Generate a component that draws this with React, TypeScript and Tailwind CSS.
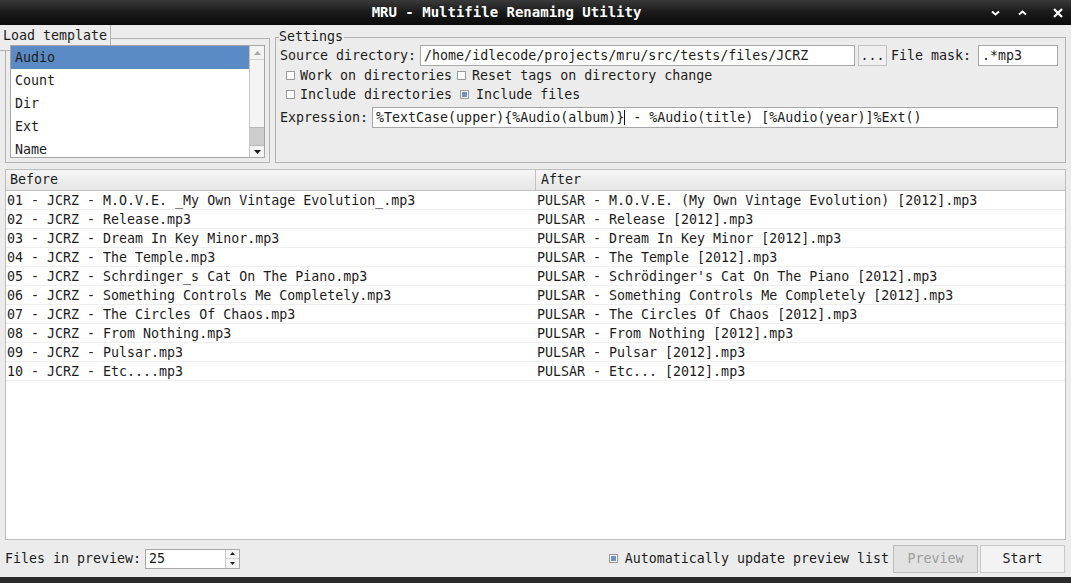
import React from 'react';

const BEFORE = [
    '01 - JCRZ - M.O.V.E. _My Own Vintage Evolution_.mp3',
    '02 - JCRZ - Release.mp3',
    '03 - JCRZ - Dream In Key Minor.mp3',
    '04 - JCRZ - The Temple.mp3',
    '05 - JCRZ - Schrdinger_s Cat On The Piano.mp3',
    '06 - JCRZ - Something Controls Me Completely.mp3',
    '07 - JCRZ - The Circles Of Chaos.mp3',
    '08 - JCRZ - From Nothing.mp3',
    '09 - JCRZ - Pulsar.mp3',
    '10 - JCRZ - Etc....mp3',
];

const AFTER = [
    'PULSAR - M.O.V.E. (My Own Vintage Evolution) [2012].mp3',
    'PULSAR - Release [2012].mp3',
    'PULSAR - Dream In Key Minor [2012].mp3',
    'PULSAR - The Temple [2012].mp3',
    "PULSAR - Schrödinger's Cat On The Piano [2012].mp3",
    'PULSAR - Something Controls Me Completely [2012].mp3',
    'PULSAR - The Circles Of Chaos [2012].mp3',
    'PULSAR - From Nothing [2012].mp3',
    'PULSAR - Pulsar [2012].mp3',
    'PULSAR - Etc... [2012].mp3',
];

const TEMPLATES = ['Audio', 'Count', 'Dir', 'Ext', 'Name'];

function Checkbox({ checked }: { checked?: boolean }) {
    return (
        <span className="w-[9px] h-[9px] border border-[#9a9a9a] bg-white flex items-center justify-center shrink-0">
            {checked && <span className="w-[5px] h-[5px] bg-[#6b93c6]" />}
        </span>
    );
}

function TitleBar() {
    return (
        <div className="h-[25px] shrink-0 flex items-center bg-gradient-to-b from-[#3a3a3a] via-[#1a1a1a] to-[#0b0b0b] text-white relative">
            <div className="flex-1 flex justify-center pr-[58px] font-bold text-[14px]">
                MRU - Multifile Renaming Utility
            </div>
            <div className="absolute right-0 top-0 h-[25px] flex items-center">
                <svg width="9" height="6" viewBox="0 0 9 6" className="mr-[18px]">
                    <path d="M1 1.5 L4.5 4.5 L8 1.5" stroke="white" strokeWidth="2" fill="none" />
                </svg>
                <svg width="9" height="6" viewBox="0 0 9 6" className="mr-[26px]">
                    <path d="M1 4.5 L4.5 1.5 L8 4.5" stroke="white" strokeWidth="2" fill="none" />
                </svg>
                <svg width="10" height="10" viewBox="0 0 10 10" className="mr-[8px]">
                    <path d="M1 1 L9 9 M9 1 L1 9" stroke="white" strokeWidth="2.2" fill="none" />
                </svg>
            </div>
        </div>
    );
}

function LoadTemplate() {
    return (
        <div className="relative w-[265px] h-[125px] mt-[1px] border border-[#b2b2b2] pl-[4px] pr-[4px] pt-[6px]">
            {/* Title tab */}
            <div className="absolute left-[-6px] top-[-14px] w-[111px] h-[26px] bg-[#ececec] border-r border-b border-[#b2b2b2] pl-[3px] leading-[22px]">
                Load template
            </div>
            <div className="relative z-10 h-[113px] border border-[#a6a6a6] bg-white flex">
                <div className="flex-1 overflow-hidden">
                    {TEMPLATES.map((t, i) => (
                        <div
                            key={t}
                            className={`h-[23px] px-[4px] flex items-center ${i === 0 ? 'bg-[#5b8bc4]' : ''}`}
                        >
                            {t}
                        </div>
                    ))}
                </div>
                {/* Scrollbar */}
                <div className="w-[15px] border-l border-[#c4c4c4] bg-[#f4f4f4] flex flex-col">
                    <div className="h-[14px] border-b border-[#cfcfcf] flex items-center justify-center">
                        <svg width="7" height="4" viewBox="0 0 7 4">
                            <path d="M0 4 L3.5 0 L7 4 Z" fill="#a8a8a8" />
                        </svg>
                    </div>
                    <div className="flex-1 flex flex-col justify-end">
                        <div className="h-[19px] bg-[#cdcdcd] border-t border-b border-[#b8b8b8]" />
                    </div>
                    <div className="h-[11px] flex items-center justify-center">
                        <svg width="7" height="4" viewBox="0 0 7 4">
                            <path d="M0 0 L3.5 4 L7 0 Z" fill="#1a1a1a" />
                        </svg>
                    </div>
                </div>
            </div>
        </div>
    );
}

function Field({ children, className = '' }: { children?: React.ReactNode; className?: string }) {
    return (
        <div className={`h-[21px] bg-white border border-[#a8a8a8] px-[3px] flex items-center whitespace-pre overflow-hidden ${className}`}>
            {children}
        </div>
    );
}

function Settings() {
    return (
        <div className="relative flex-1 h-[126px] border border-[#b2b2b2] pl-[4px] pr-[7px] pt-[7px] flex flex-col">
            <div className="absolute left-[3px] top-[-9px] bg-[#ececec] pr-[1px] leading-[16px]">Settings</div>

            <div className="h-[21px] flex items-center">
                <span>Source directory:</span>
                <Field className="flex-1 ml-[4px]">/home/idlecode/projects/mru/src/tests/files/JCRZ</Field>
                <button className="ml-[3px] w-[29px] h-[21px] bg-[#efefef] border border-[#c2c2c2] flex items-center justify-center">
                    ...
                </button>
                <span className="ml-[4px]">File mask:</span>
                <Field className="w-[80px] ml-[7px]">.*mp3</Field>
            </div>

            <div className="h-[19px] flex items-center pl-[6px]">
                <Checkbox />
                <span className="ml-[5px]">Work on directories</span>
                <span className="ml-[5px]"><Checkbox /></span>
                <span className="ml-[6px]">Reset tags on directory change</span>
            </div>

            <div className="h-[19px] flex items-center pl-[6px]">
                <Checkbox />
                <span className="ml-[5px]">Include directories</span>
                <span className="ml-[8px]"><Checkbox checked /></span>
                <span className="ml-[7px]">Include files</span>
            </div>

            <div className="h-[21px] mt-[3px] flex items-center">
                <span>Expression:</span>
                <Field className="flex-1 ml-[4px]">
                    %TextCase(upper){'{'}%Audio(album){'}'}
                    <span className="inline-block w-[1px] h-[15px] bg-[#111] align-middle" />
                    {' - %Audio(title) [%Audio(year)]%Ext()'}
                </Field>
            </div>
        </div>
    );
}

function PreviewTable() {
    return (
        <div className="mx-[5px] h-[371px] shrink-0 border border-[#bdbdbd] bg-white flex flex-col">
            <div className="h-[21px] grid grid-cols-[530px_1fr] bg-gradient-to-b from-[#f6f6f6] to-[#e6e6e6] border-b border-[#c2c2c2]">
                <div className="pl-[4px] flex items-center border-r border-[#c2c2c2]">Before</div>
                <div className="pl-[5px] flex items-center">After</div>
            </div>
            {BEFORE.map((b, i) => (
                <div key={b} className="h-[19px] grid grid-cols-[530px_1fr] border-b border-[#efefef] whitespace-pre">
                    <div className="pl-[1px] flex items-center">{b}</div>
                    <div className="pl-[1px] flex items-center">{AFTER[i]}</div>
                </div>
            ))}
        </div>
    );
}

function BottomBar() {
    return (
        <div className="h-[37px] shrink-0 flex items-center pl-[5px] pr-[6px]">
            <span>Files in preview:</span>
            <div className="ml-[4px] w-[95px] h-[20px] bg-white border border-[#a8a8a8] flex">
                <div className="flex-1 pl-[3px] flex items-center">25</div>
                <div className="w-[14px] border-l border-[#c8c8c8] bg-[#f4f4f4] flex flex-col">
                    <div className="flex-1 flex items-center justify-center border-b border-[#d4d4d4]">
                        <svg width="5" height="3" viewBox="0 0 5 3"><path d="M0 3 L2.5 0 L5 3 Z" fill="#222" /></svg>
                    </div>
                    <div className="flex-1 flex items-center justify-center">
                        <svg width="5" height="3" viewBox="0 0 5 3"><path d="M0 0 L2.5 3 L5 0 Z" fill="#222" /></svg>
                    </div>
                </div>
            </div>

            <div className="ml-auto flex items-center">
                <Checkbox checked />
                <span className="ml-[7px]">Automatically update preview list</span>
                <button className="ml-[4px] w-[85px] h-[28px] bg-[#e2e2e2] border border-[#bdbdbd] text-[#9c9c9c]">
                    Preview
                </button>
                <button className="ml-[2px] w-[85px] h-[28px] bg-[#f3f3f3] border border-[#c9c9c9]">
                    Start
                </button>
            </div>
        </div>
    );
}

export default function App() {
    return (
        <div className="w-[1071px] h-[583px] overflow-hidden bg-[#ececec] flex flex-col font-['DejaVu_Sans_Mono','Liberation_Mono',monospace] text-[13.3px] text-[#1c1c1c]">
            <TitleBar />
            <div className="h-[144px] shrink-0 flex gap-[5px] pt-[12px] px-[5px]">
                <LoadTemplate />
                <Settings />
            </div>
            <PreviewTable />
            <BottomBar />
            <div className="h-[6px] shrink-0 bg-[#2b2b2b]" />
        </div>
    );
}
